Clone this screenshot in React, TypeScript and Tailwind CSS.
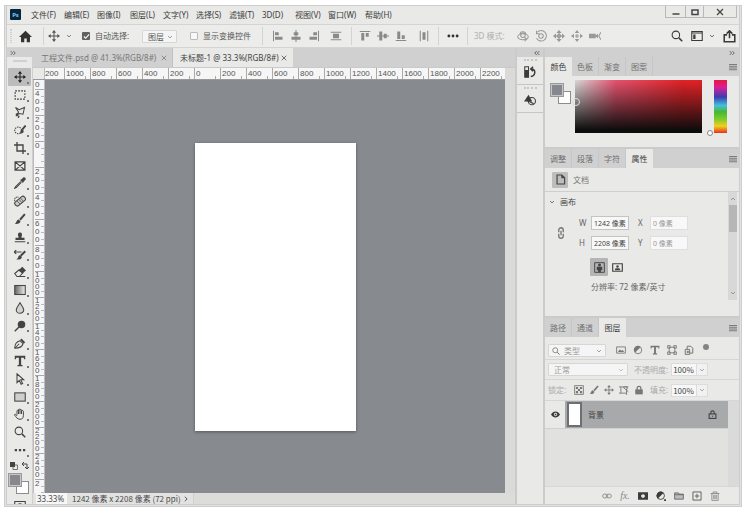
import type { ReactNode } from "react";

type IconProps = { children: ReactNode; className?: string };

function Icon({ children, className = "size-3" }: IconProps) {
  return (
    <svg viewBox="0 0 16 16" fill="none" stroke="currentColor" strokeWidth="1.4" className={`block shrink-0 ${className}`} aria-hidden="true">
      {children}
    </svg>
  );
}

const solid = { fill: "currentColor", stroke: "none" };

const moveShape = (
  <>
    <path d="M8 2v12M2 8h12" />
    <path {...solid} d="M8 0l2.800 3.600H5.200zM8 16l2.800-3.600H5.200zM0 8l3.600-2.800v5.600zM16 8l-3.600-2.800v5.600z" />
  </>
);
const chevronDown = <path d="M3 5.500l5 5 5-5" strokeWidth="2" />;
const lockShape = (
  <>
    <rect x="2" y="7" width="12" height="8" strokeWidth="2" />
    <path d="M5 7V4.500a3 3 0 0 1 6 0V7M8 10v2" strokeWidth="2" />
  </>
);
const magnifier = (
  <>
    <circle cx="6.500" cy="6.500" r="5" />
    <path d="M10.500 10.500L15 15" strokeWidth="2" />
  </>
);
const brushShape = (
  <>
    <path d="M14.500 1.500L8 9" strokeWidth="2.600" />
    <path {...solid} d="M6 8.500l2.600 2.300c0 3-3 4-7.600 3.700C3.500 13.500 3 9 6 8.500z" />
  </>
);

const menus = ["文件(F)", "编辑(E)", "图像(I)", "图层(L)", "文字(Y)", "选择(S)", "滤镜(T)", "3D(D)", "视图(V)", "窗口(W)", "帮助(H)"];

function MenuBar() {
  return (
    <header className="flex h-[18px] shrink-0 items-start">
      <div className="ml-[3px] mt-[3px] flex h-[11px] w-[11px] items-center justify-center rounded-[1px] bg-[#06243a] text-[6px] font-bold leading-none text-[#7cc4ee]">Ps</div>
      <nav className="ml-[6px] flex h-[18px] items-center text-[#3c3c3c]">
        {menus.map((m) => (
          <button key={m} type="button" className="w-[33px] whitespace-nowrap px-1 text-left leading-[18px] last:ml-1">
            {m}
          </button>
        ))}
      </nav>
      <div className="ml-auto mr-[2px] flex h-3 border-x border-b border-[#b9b9b9] text-[#444]">
        <button type="button" aria-label="最小化" className="flex w-5 items-center justify-center border-r border-[#b9b9b9]">
          <Icon className="size-2"><path d="M1 12h14" strokeWidth="3" /></Icon>
        </button>
        <button type="button" aria-label="最大化" className="flex w-[18px] items-center justify-center border-r border-[#b9b9b9]">
          <Icon className="size-2"><path d="M2 4h12v9H2z" strokeWidth="3" /></Icon>
        </button>
        <button type="button" aria-label="关闭" className="flex w-8 items-center justify-center">
          <Icon className="size-2"><path d="M2 2l12 12M14 2L2 14" strokeWidth="2.500" /></Icon>
        </button>
      </div>
    </header>
  );
}

const alignA = [
  { n: "左对齐", i: <><path d="M2 1v14" /><path {...solid} d="M4 3h5v4H4zM4 9h10v4H4z" /></> },
  { n: "水平居中", i: <><path d="M8 0v16" /><path {...solid} d="M5 3h6v4H5zM2 9h12v4H2z" /></> },
  { n: "右对齐", i: <><path d="M14 1v14" /><path {...solid} d="M7 3h5v4H7zM2 9h10v4H2z" /></> },
];
const alignB = [
  { n: "顶对齐", i: <><path d="M1 2h14" /><path {...solid} d="M3 4h4v10H3zM9 4h4v5H9z" /></> },
  { n: "垂直居中", i: <><path d="M0 8h16" /><path {...solid} d="M3 2h4v12H3zM9 5h4v6H9z" /></> },
  { n: "底对齐", i: <><path d="M1 14h14" /><path {...solid} d="M3 2h4v10H3zM9 7h4v5H9z" /></> },
];
const modes3d = [
  { n: "旋转", i: <><ellipse cx="8" cy="9" rx="7" ry="4" /><path d="M4 6c0-5 7-5 8 0M10 15l3-3-3-2" /><circle cx="8" cy="7" r="3" /></> },
  { n: "滚动", i: <><path d="M3 3a7 7 0 1 1-1 8M2 1v4h4" /><circle cx="8" cy="8" r="3" /></> },
  { n: "平移", i: <><path d="M8 2v12M2 8h12M5 8l3-3 3 3-3 3z" /><path {...solid} d="M8 0l3.500 4h-7zM8 16l3.500-4h-7zM0 8l4-3.500v7zM16 8l-4-3.500v7z" /></> },
  { n: "滑动", i: <><path {...solid} d="M8 0l3 4H5zM8 16l3-4H5zM0 8l4-3v6zM16 8l-4-3v6z" /><circle cx="8" cy="8" r="1.500" /></> },
  { n: "相机", i: <><path {...solid} d="M0 5h9v6H0zM8 8l4-3v6z" /><path d="M16 3l-3 5 3 5" /></> },
];

function Separator() {
  return <span className="h-[18px] w-px shrink-0 bg-[#d3d3d3]" />;
}

function ToolButton({ name, children }: { name: string; children: ReactNode }) {
  return (
    <button type="button" aria-label={name} className="flex w-[18px] shrink-0 items-center justify-center">
      <Icon className="size-3">{children}</Icon>
    </button>
  );
}

function Dropdown({ label, value, className, pad = "pl-[5px]", chevron = "text-[#777]" }: { label: string; value: string; className: string; pad?: string; chevron?: string }) {
  return (
    <span className={`relative h-[13px] shrink-0 rounded-[1px] border border-[#d6d6d6] bg-[#f5f5f5] ${className}`}>
      <select aria-label={label} className={`block h-full w-full appearance-none bg-transparent leading-[11px] outline-none ${pad}`}>
        <option>{value}</option>
      </select>
      <span className={`pointer-events-none absolute right-[3px] top-[3px] ${chevron}`}>
        <Icon className="size-[6px]">{chevronDown}</Icon>
      </span>
    </span>
  );
}

function OptionsBar() {
  return (
    <div className="flex h-6 shrink-0 items-center overflow-hidden border-y border-[#d4d4d4] bg-[#ececeb] text-[#555]">
      <span className="ml-[3px] h-[14px] w-[2px] shrink-0 border-x border-dotted border-[#cfcfcf]" />
      <button type="button" aria-label="主页" className="ml-[7px] mr-[11px] text-[#333]">
        <Icon className="size-[13px]"><path {...solid} d="M8 1l8 7.500h-2.500V15h-4v-4.500h-3V15h-4V8.500H0z" /></Icon>
      </button>
      <Separator />
      <button type="button" aria-label="移动工具" className="ml-1 flex items-center gap-[6px]">
        <Icon className="size-3">{moveShape}</Icon>
        <Icon className="size-[6px]">{chevronDown}</Icon>
      </button>
      <label className="ml-[10px] flex w-[60px] shrink-0 items-center gap-[5px] whitespace-nowrap">
        <input type="checkbox" defaultChecked className="peer sr-only" />
        <span className="flex size-2 items-center justify-center rounded-[1px] bg-[#626262] text-white">
          <Icon className="size-[7px]"><path d="M2 8l4 4 8-9" strokeWidth="2.500" /></Icon>
        </span>
        自动选择:
      </label>
      <Dropdown label="自动选择" value="图层" className="w-[35px]" />
      <label className="ml-[13px] flex w-[72px] shrink-0 items-center gap-[5px] whitespace-nowrap">
        <input type="checkbox" className="size-2 appearance-none rounded-[1px] border border-[#bbb] bg-[#f8f8f8]" />
        显示变换控件
      </label>
      <Separator />
      <div className="flex pl-[6px] text-[#8a8a8a]">
        {alignA.map((a) => <ToolButton key={a.n} name={a.n}>{a.i}</ToolButton>)}
        <span className="w-1" />
        <ToolButton name="水平分布"><path d="M1 3h14M1 13h14" /><path {...solid} d="M4 5h8v6H4z" /></ToolButton>
      </div>
      <span className="w-[6px]" />
      <Separator />
      <div className="flex pl-1 text-[#8a8a8a]">
        {alignB.map((a) => <ToolButton key={a.n} name={a.n}>{a.i}</ToolButton>)}
        <span className="w-[5px]" />
        <ToolButton name="垂直分布"><path d="M3 1v14M13 1v14" /><path {...solid} d="M6 3h4v10H6z" /></ToolButton>
      </div>
      <span className="w-[5px]" />
      <Separator />
      <div className="flex px-[5px] text-[#333]">
        <ToolButton name="更多"><g {...solid}><circle cx="2.500" cy="8" r="1.900" /><circle cx="8" cy="8" r="1.900" /><circle cx="13.500" cy="8" r="1.900" /></g></ToolButton>
      </div>
      <Separator />
      <span className="w-[46px] shrink-0 whitespace-nowrap pl-[6px] text-[#b0b0b0]">3D 模式:</span>
      <div className="flex text-[#999]">
        {modes3d.map((a) => <ToolButton key={a.n} name={a.n}>{a.i}</ToolButton>)}
      </div>
      <div className="ml-auto mr-[3px] flex items-center text-[#3a3a3a]">
        <ToolButton name="搜索">{magnifier}</ToolButton>
        <button type="button" aria-label="工作区" className="flex items-center gap-[6px] pl-[5px] pr-2">
          <Icon className="size-3"><path d="M1 2h14v12H1zM1 4h14" /><path {...solid} d="M3 6h3v6H3z" /></Icon>
          <Icon className="size-[6px]">{chevronDown}</Icon>
        </button>
        <button type="button" aria-label="共享">
          <Icon className="size-[13px]"><path d="M5 6H1.500v8.500h13V6H11M8 10V2M4.500 4.500L8 1l3.500 3.500" strokeWidth="1.900" /></Icon>
        </button>
      </div>
    </div>
  );
}

const tools: { n: string; i: ReactNode; flat?: boolean }[] = [
  { n: "移动", i: moveShape },
  { n: "选框", i: <path d="M1.500 2.500h13v11h-13z" strokeDasharray="2.500 1.500" /> },
  { n: "套索", i: <path d="M2 2l5 3 7-3-2 9-5-1-3 2 2-4zM5 10c-3 0-3 3 0 3s1 3 0 3" /> },
  { n: "快速选择", i: <><circle cx="5.500" cy="8.500" r="4.500" strokeDasharray="2 1.200" /><path d="M15.500 2L11 7.500" strokeWidth="2.600" /><path {...solid} d="M10 6.500l3 2.500c0 3-2 4-5.500 4 2-2 .500-5 2.500-6.500z" /></> },
  { n: "裁剪", i: <path d="M4 0v12h12M0 4h12v12" strokeWidth="1.800" /> },
  { n: "图框", i: <path d="M1.500 2.500h13v11h-13zM1.500 2.500l13 11M14.500 2.500l-13 11" strokeWidth="1.700" />, flat: true },
  { n: "吸管", i: <><path d="M9 6L2 13l-1 2 2-1 7-7" /><path {...solid} d="M8 4l2-1 2-2c2-2 5 1 3 3l-2 2-1 2z" /></> },
  { n: "修复画笔", i: <><rect x="0" y="5" width="16" height="6.500" rx="2.500" transform="rotate(-40 8 8)" fill="#c9c9c9" /><path d="M6 5.500l5 5M4 8l4 4M8.500 4l4 4.500" strokeWidth="1" /><path d="M1 8c-1-4 2-6 5-5" strokeDasharray="1.500 1" /></> },
  { n: "画笔", i: brushShape },
  { n: "图章", i: <path {...solid} d="M6 7.500C2.500 0 13.500 0 10 7.500V9h4v3H2V9h4zM1 13.500h14V15H1z" /> },
  { n: "历史画笔", i: <><path d="M15 3l-6 6" strokeWidth="2.600" /><path {...solid} d="M8 8l2.500 2.500C10 14 7 14 3 14c3-1 2-5 5-6z" /><path d="M0 4h10M3 1.500L0 4l3 2.500" /></> },
  { n: "橡皮擦", i: <><path d="M1 10l6-5 5 4-5 5H4z" /><path {...solid} d="M6 6l5-5 5 5-5 4z" /><path d="M6 14h9" /></> },
  { n: "渐变", i: <rect x="1" y="2" width="14" height="12" fill="url(#toolGradient)" /> },
  { n: "模糊", i: <path d="M8 1C6 5 3 7.500 3 10.500a5 4.500 0 0 0 10 0C13 7.500 10 5 8 1z" fill="#d2d2d2" /> },
  { n: "减淡", i: <><circle {...solid} cx="10" cy="6" r="5" /><path d="M7 9l-6 6" strokeWidth="2" /></> },
  { n: "钢笔", i: <><path d="M1 15c0-6 3-9 7-10l4 4c-1 4-4 6-11 6zM1 15l6-6" /><path d="M9 3l5 5" strokeWidth="2.600" /></> },
  { n: "文字", i: <path {...solid} d="M1 1h14v4.500h-1.500L13 3.500H9.500v9.500l2 .500V15h-7v-1.500l2-.500V3.500H3l-.500 2H1z" /> },
  { n: "路径选择", i: <path d="M4 1v12l3-3 2.500 5 2-1L9 9h4z" /> },
  { n: "矩形", i: <rect x="1" y="2.500" width="14" height="11" fill="#cfcfcf" /> },
  { n: "抓手", i: <path d="M4 9V4c0-1.500 2-1.500 2 0V2.500c0-1.500 2-1.500 2 0v.500c0-1.500 2-1.500 2 0v1.500c0-1.500 2.500-1.500 2.500 0V10c0 4-2 5-4.500 5C4 15 3 12 .800 9.500c-.500-1.500 1.200-2 3.200 1M6 4v4M8 3v5M10 4v4" strokeWidth="1.300" /> },
  { n: "缩放", i: magnifier, flat: true },
  { n: "编辑工具栏", i: <path {...solid} d="M1 6.500h3v3H1zM6.500 6.500h3v3h-3zM12 6.500h3v3h-3z" /> },
];

function Swatches({ className = "" }: { className?: string }) {
  return (
    <div className={`relative h-[21px] w-[21px] shrink-0 ${className}`}>
      <button type="button" aria-label="背景色" className="absolute bottom-0 right-0 size-[13px] border border-[#8d8d8d] bg-white" />
      <button type="button" aria-label="前景色" className="absolute left-0 top-0 size-[14px] border border-[#999] bg-[#85898e] outline-1 -outline-offset-2 outline-[#c6c6c6]" />
    </div>
  );
}

function Toolbar() {
  return (
    <aside className="flex w-[26px] shrink-0 flex-col overflow-hidden border-r border-[#cfcfcf] bg-[#e9e9e8] text-[#444]">
      <svg className="absolute size-0" aria-hidden="true">
        <defs><linearGradient id="toolGradient"><stop stopColor="#666" /><stop offset="1" stopColor="#eee" /></linearGradient></defs>
      </svg>
      <button type="button" aria-label="展开面板" className="flex h-[9px] shrink-0 items-center bg-[#d0d0d0] pl-[3px]">
        <Icon className="size-[6px]"><path d="M2 3l5 5-5 5M9 3l5 5-5 5" strokeWidth="2" /></Icon>
      </button>
      <div className="mx-auto mt-[3px] h-[2px] w-[14px] shrink-0 bg-[#d0d0d0]" />
      <div className="mt-[6px] flex h-[391px] shrink-0 flex-col">
        {tools.map((t, k) => (
          <button
            key={t.n}
            type="button"
            aria-label={t.n}
            className={`relative mx-px flex flex-1 items-center justify-center ${k === 0 ? "rounded-[1px] bg-[#bcbcbc] text-[#222]" : ""}`}
          >
            <Icon className="size-3">{t.i}</Icon>
            {!t.flat && <span className="absolute bottom-[2px] right-[2px] h-[2px] w-[2px] bg-[#777]" />}
          </button>
        ))}
      </div>
      <div className="flex h-[14px] shrink-0 items-center justify-between px-[3px]">
        <Icon className="size-2"><path d="M6 6h9v9H6z" /><path {...solid} d="M0 0h10v10H0z" /></Icon>
        <Icon className="size-2"><path d="M3 4h9v9M6 0L2 4l4 4M8 10l4 4 4-4" strokeWidth="2" /></Icon>
      </div>
      <Swatches className="ml-px" />
      <button type="button" aria-label="快速蒙版" className="mx-auto mt-[6px]">
        <Icon className="size-3"><path d="M1 2h14v12H1z" /><circle cx="8" cy="8" r="3" /></Icon>
      </button>
    </aside>
  );
}

const horizontalMarks = [1000, 800, 600, 400, 200, 0, 200, 400, 600, 800, 1000, 1200, 1400, 1600, 1800, 2000, 2200];
const verticalMarks = ["400", "200", "0", "200", "400", "600", "800", "1000", "1200", "1400", "1600", "1800", "2000", "2200", "2400", "2"];

function DocumentTab({ title, active = false }: { title: string; active?: boolean }) {
  return (
    <div className={`flex items-center justify-between whitespace-nowrap ${active ? "w-[120px] bg-[#e9e9e8] pl-[7px] pr-[6px] text-[#444]" : "w-[140px] border-r border-[#c2c2c2] pl-2 pr-[5px] text-[#777]"}`}>
      <button type="button">{title}</button>
      <button type="button" aria-label="关闭文档" className="shrink-0">
        <Icon className="size-[6px]"><path d="M2 2l12 12M14 2L2 14" strokeWidth="2" /></Icon>
      </button>
    </div>
  );
}

function DocumentArea() {
  return (
    <main className="flex min-w-0 flex-1 flex-col bg-[#dadad9]">
      <div className="flex h-5 shrink-0 border-b border-[#c9c9c9] bg-[#d0d0d0]">
        <DocumentTab title="工程文件.psd @ 41.3%(RGB/8#)" />
        <DocumentTab title="未标题-1 @ 33.3%(RGB/8#)" active />
      </div>
      <div className="mr-[10px] flex h-3 shrink-0 overflow-hidden border-b border-[#999] bg-[#f6f6f6] font-['Liberation_Sans',sans-serif] leading-[11px] text-[#555]">
        <span className="w-3 shrink-0 border-r border-[#bbb] bg-[#e9e9e8]" />
        <span className="flex w-[19px] shrink-0">200</span>
        {horizontalMarks.map((m, k) => (
          <span key={k} className="flex w-[26px] shrink-0 justify-between border-l border-[#aaa] pl-px">
            {m}
            <i className="mr-1 h-[3px] w-px self-end bg-[#aaa]" />
          </span>
        ))}
      </div>
      <div className="flex min-h-0 flex-1">
        <div className="w-3 shrink-0 overflow-hidden border-x border-[#bbb] bg-[#f6f6f6] pl-px font-['Liberation_Sans',sans-serif] text-[#555]">
          <div className="h-[9px] leading-[9px]">0</div>
          {verticalMarks.map((m, k) => (
            <div key={k} className="flex h-[26px] justify-between border-t border-[#aaa]">
              <span className={`w-[5px] break-all ${m.length > 3 ? "leading-[6px]" : "leading-[8px]"}`}>{m}</span>
              <span className="flex w-[3px] flex-col justify-evenly">
                <i className="h-px bg-[#bbb]" />
                <i className="h-px bg-[#bbb]" />
                <i className="h-px bg-[#bbb]" />
              </span>
            </div>
          ))}
        </div>
        <div className="flex flex-1 items-center justify-center bg-[#878b90]">
          <div className="h-[288px] w-[161px] bg-white shadow-[0_1px_3px_#55585c]" />
        </div>
        <div className="w-[10px] shrink-0" />
      </div>
      <footer className="flex h-[11px] shrink-0 items-center bg-[#e2e2e1] text-[#4a4a4a]">
        <input aria-label="缩放比例" defaultValue="33.33%" className="ml-[3px] h-[11px] w-[31px] bg-[#f7f7f7] pl-px outline-none" />
        <span className="w-[112px] whitespace-nowrap pl-[5px] font-['Noto_Sans_CJK_SC',sans-serif] leading-[11px]">1242 像素 x 2208 像素 (72 ppi)</span>
        <button type="button" aria-label="状态信息" className="ml-1">
          <Icon className="size-[6px]"><path d="M5 2l6 6-6 6" strokeWidth="2.400" /></Icon>
        </button>
        <span className="ml-1 h-full flex-1 border-l border-[#d0d0d0] bg-[#dcdcdb]" />
      </footer>
    </main>
  );
}

function PanelTabs({ items, active }: { items: string[]; active: number }) {
  return (
    <div className="flex h-[19px] shrink-0 items-stretch bg-[#d0d0d0] text-[#707070]">
      {items.map((t, k) => (
        <button key={t} type="button" className={`w-[27px] ${k === active ? "bg-[#e9e9e8] text-[#3c3c3c]" : "border-r border-[#c6c6c6]"}`}>
          {t}
        </button>
      ))}
      <button type="button" aria-label="面板菜单" className="ml-auto mr-[2px] text-[#666]">
        <Icon className="size-2"><path d="M0 3h16M0 6.500h16M0 10h16M0 13.500h16" strokeWidth="1.600" /></Icon>
      </button>
    </div>
  );
}

function IconStrip() {
  return (
    <aside className="flex w-[30px] shrink-0 flex-col border-x-2 border-[#cbcbcb] bg-[#e9e9e8] text-[#3c3c3c]">
      <div className="flex h-[9px] items-center justify-end bg-[#d0d0d0] pr-[3px]">
        <Icon className="size-[6px]"><path d="M7 3L2 8l5 5M14 3L9 8l5 5" strokeWidth="2" /></Icon>
      </div>
      <button type="button" aria-label="历史记录" className="flex h-7 flex-col items-center gap-[5px] border-b border-[#c6c6c6] pt-[2px]">
        <span className="w-[13px] border-t-2 border-dotted border-[#c6c6c6]" />
        <Icon className="size-3"><path d="M1 1h5v14H1zM1 6h5M1 10h5" /><path {...solid} d="M1 6h5v9H1z" /><path d="M9 14c7-1 7-10 1-10M12 1L9 4l3 3" strokeWidth="2" /></Icon>
      </button>
      <button type="button" aria-label="库" className="flex h-7 flex-col items-center gap-[5px] border-b border-[#c6c6c6] pt-[2px]">
        <span className="w-[13px] border-t-2 border-dotted border-[#c6c6c6]" />
        <Icon className="size-3"><path {...solid} d="M6 1l5 9H0z" /><circle cx="10.500" cy="9.500" r="4.800" /><path d="M5 9l8 4" /></Icon>
      </button>
    </aside>
  );
}

function ColorPanel() {
  return (
    <section className="shrink-0 border-b-2 border-[#cbcbcb]">
      <PanelTabs items={["颜色", "色板", "渐变", "图案"]} active={0} />
      <div className="flex h-[71px] items-start pl-[5px] pt-1">
        <Swatches className="mt-[3px]" />
        <div className="relative ml-1 h-[53px] flex-1 bg-[linear-gradient(to_bottom,transparent,#0c0c0c_95%),linear-gradient(to_right,#d8d8d8,#e5536f_32%,#e32226_85%)]">
          <span className="absolute -left-[3px] top-[18px] size-2 rounded-full border border-[#ddd]" />
        </div>
        <div className="relative ml-3 mr-3 h-[53px] w-[13px] bg-[linear-gradient(to_bottom,#e8183f,#d91f9a_14%,#3b3db0_32%,#45bfe0_48%,#45b832_60%,#7ecb2a_74%,#f0d020_87%,#e8301c)]">
          <span className="absolute -bottom-[3px] -left-[7px] size-[6px] rounded-full border border-[#888] bg-white" />
        </div>
      </div>
    </section>
  );
}

function SizeField({ label, value, muted = false }: { label: string; value: string; muted?: boolean }) {
  return (
    <label className="flex items-center text-[#666]">
      <span className="w-3">{label}</span>
      <input defaultValue={value} className={`h-[14px] w-[38px] border bg-[#f8f8f8] pl-[2px] text-[7px] outline-none ${muted ? "border-[#dfdfdf] text-[#999]" : "border-[#c4c4c4] text-[#444]"}`} />
    </label>
  );
}

function PropertiesPanel() {
  return (
    <section className="shrink-0 border-b-2 border-[#cbcbcb]">
      <PanelTabs items={["调整", "段落", "字符", "属性"]} active={3} />
      <div className="flex h-6 items-center gap-[5px] border-b border-[#cfcfcf] pl-[7px] text-[#777]">
        <span className="flex size-4 items-center justify-center rounded-[1px] bg-[#bdbdbd] text-[#444]">
          <Icon className="size-[11px]"><path d="M3 1.500h7l4 4v9H3zM10 1.500v4h4" strokeWidth="1.700" /></Icon>
        </span>
        文档
      </div>
      <div className="flex h-[108px]">
        <div className="flex-1">
          <button type="button" className="flex h-5 items-center gap-[5px] pl-1 text-[#444]">
            <Icon className="size-[6px]">{chevronDown}</Icon>
            画布
          </button>
          <div className="flex items-center pl-[10px] pt-1">
            <Icon className="size-3 text-[#777]"><path d="M5 7V4a3 3 0 0 1 6 0v3M5 9v3a3 3 0 0 0 6 0V9M8 5v6" strokeWidth="1.800" /></Icon>
            <div className="ml-3 grid grid-cols-2 gap-x-[9px] gap-y-[6px]">
              <SizeField label="W" value="1242 像素" />
              <SizeField label="X" value="0 像素" muted />
              <SizeField label="H" value="2208 像素" />
              <SizeField label="Y" value="0 像素" muted />
            </div>
          </div>
          <div className="flex items-center gap-1 pl-[45px] pt-2 text-[#444]">
            <button type="button" aria-label="纵向" className="flex size-[18px] items-center justify-center rounded-[1px] bg-[#b5b5b5]">
              <Icon className="size-[11px]"><path d="M1 1h14v14H1z" /><circle {...solid} cx="8" cy="4.500" r="2.200" /><path {...solid} d="M4 7h8v5h-2v3H6v-3H4z" /></Icon>
            </button>
            <button type="button" aria-label="横向">
              <Icon className="size-[11px]"><path d="M1 2.500h14v11H1z" strokeWidth="1.700" /><circle {...solid} cx="8" cy="6.500" r="1.800" /><path {...solid} d="M4 12l1-3h6l1 3z" /></Icon>
            </button>
          </div>
          <p className="whitespace-nowrap pl-[46px] pt-[5px] leading-3 text-[#666]">分辨率: 72 像素/英寸</p>
        </div>
        <div className="mr-[2px] flex w-[9px] flex-col items-center bg-[#d8d8d8] text-[#777]">
          <Icon className="mt-1 size-[6px]"><path d="M3 10.500l5-5 5 5" strokeWidth="2" /></Icon>
          <span className="mt-[3px] h-[27px] w-2 bg-[#b6b6b6]" />
          <Icon className="mb-1 mt-auto size-[6px]">{chevronDown}</Icon>
        </div>
      </div>
      <div className="h-4" />
    </section>
  );
}

const filters = [
  { n: "像素图层", i: <><path d="M1 3h14v10H1z" /><path {...solid} d="M3 11l3-4 3 2 2-1 2 3z" /></> },
  { n: "调整图层", i: <><circle cx="8" cy="8" r="6" /><path {...solid} d="M12 3.500A6 6 0 1 0 3.500 12z" /></> },
  { n: "文字图层", i: <path {...solid} d="M1 1h14v4.500h-1.500L13 3.500H9.500v9.500l2 .500V15h-7v-1.500l2-.500V3.500H3l-.500 2H1z" /> },
  { n: "形状图层", i: <path d="M3.500 3.500h9v9h-9zM1 1h4v4H1zM11 1h4v4h-4zM1 11h4v4H1zM11 11h4v4h-4z" /> },
  { n: "智能对象", i: <path d="M2 7h7v8H2zM5 7V2h6l3 3v8H9M5 10h2v2H5z" strokeWidth="1.600" /> },
];
const locks = [
  { n: "锁定透明像素", i: <><path d="M1 1h14v14H1z" /><path {...solid} d="M3 3h3.500v3.500H3zM9.500 3H13v3.500H9.500zM6.300 6.300h3.400v3.400H6.300zM3 9.500h3.500V13H3zM9.500 9.500H13V13H9.500z" /></> },
  { n: "锁定图像像素", i: brushShape },
  { n: "锁定位置", i: moveShape },
  { n: "防止嵌套", i: <path d="M0 3h15M3 3v10M0 13h12M12 6v10M6 3l9 8M8 3h5v4" /> },
  { n: "锁定全部", i: <><path d="M5 8V5a3 3 0 0 1 6 0v3" strokeWidth="2" /><path {...solid} d="M2 7h12v8H2z" /></> },
];
const layerActions = [
  { n: "链接", i: <path d="M7 5H4a3 3 0 0 0 0 6h3M9 5h3a3 3 0 0 1 0 6H9M7 5v6M9 5v6" />, c: "text-[#888]" },
  { n: "样式", i: null, c: "text-[#888]" },
  { n: "蒙版", i: <path {...solid} fillRule="evenodd" d="M0 2h16v12H0zM8 5a3 3 0 1 0 .1 0z" />, c: "text-[#3c3c3c]" },
  { n: "调整", i: <><circle cx="7.500" cy="7.500" r="6" /><path {...solid} d="M12 3A6 6 0 1 0 3 12zM13 13h3v3h-3z" /></>, c: "text-[#3c3c3c]" },
  { n: "组", i: <path d="M1 3h6l1 2h7v8H1zM1 6h14" fill="#bdbdbd" />, c: "text-[#666]" },
  { n: "新建", i: <path d="M1.500 1.500h13v13h-13zM8 4.500v7M4.500 8h7" />, c: "text-[#555]" },
  { n: "删除", i: <path d="M1 4h14M5 4V1.500h6V4M3 4v11h10V4M6 6v7M8 6v7M10 6v7" />, c: "text-[#888]" },
];

function Percent({ label }: { label: string }) {
  return (
    <label className="flex shrink-0 items-center whitespace-nowrap text-[#a8a8a8]">
      {label}
      <input defaultValue="100%" className="ml-[3px] h-[13px] w-[26px] border border-[#dcdcdc] bg-[#f7f7f7] pl-px font-['Noto_Sans_CJK_SC',sans-serif] text-[#444] outline-none" />
      <span className="flex h-[13px] w-[11px] items-center justify-center border-y border-r border-[#dcdcdc] bg-[#f1f1f1] text-[#888]">
        <Icon className="size-[6px]">{chevronDown}</Icon>
      </span>
    </label>
  );
}

function LayersPanel() {
  return (
    <section className="flex min-h-0 flex-1 flex-col">
      <PanelTabs items={["路径", "通道", "图层"]} active={2} />
      <div className="flex h-[23px] shrink-0 items-center border-b border-[#d6d6d6] pl-[3px] pt-1 text-[#999]">
        <span className="relative flex">
          <Dropdown label="图层类型" value="类型" className="w-[58px]" pad="pl-[15px]" />
          <span className="pointer-events-none absolute left-1 top-[3px] text-[#666]">
            <Icon className="size-2">{magnifier}</Icon>
          </span>
        </span>
        <div className="ml-[9px] flex gap-[5px] text-[#777]">
          {filters.map((f) => (
            <button key={f.n} type="button" aria-label={f.n} className="flex w-3 justify-center"><Icon className="size-[10px]">{f.i}</Icon></button>
          ))}
        </div>
        <span className="mb-[6px] ml-2 size-[6px] rounded-full bg-[#848484]" />
      </div>
      <div className="flex h-5 shrink-0 items-center border-b border-[#d6d6d6] pl-[3px] text-[#999]">
        <Dropdown label="混合模式" value="正常" className="mr-[6px] w-[80px]" chevron="text-[#aaa]" />
        <Percent label="不透明度:" />
      </div>
      <div className="flex h-[21px] shrink-0 items-center border-b border-[#d6d6d6] pl-[3px] text-[#aaa]">
        <span className="w-[25px] shrink-0">锁定:</span>
        <div className="flex gap-1 text-[#777]">
          {locks.map((f) => (
            <button key={f.n} type="button" aria-label={f.n} className="flex w-[11px] justify-center"><Icon className="size-[10px]">{f.i}</Icon></button>
          ))}
        </div>
        <span className="w-[6px]" />
        <Percent label="填充:" />
      </div>
      <div className="flex min-h-0 flex-1 bg-[#e1e1e0]">
        <div className="flex-1">
          <div className="flex h-7 border-b border-[#d0d0d0]">
            <button type="button" aria-label="切换可见性" className="flex w-5 items-center justify-center bg-[#e9e9e8] text-[#3c3c3c]">
              <Icon className="size-[9px]"><path {...solid} fillRule="evenodd" d="M0 8c4-7 12-7 16 0-4 7-12 7-16 0zM8 5a3 3 0 1 0 .1 0z" /><circle {...solid} cx="8" cy="8" r="1.500" /></Icon>
            </button>
            <div className="flex flex-1 items-center bg-[#a8a9ab] pl-[2px] pr-[11px] text-[#444]">
              <span className="h-[25px] w-[15px] border-2 border-[#6d6f72] bg-white" />
              <span className="ml-[6px]">背景</span>
              <Icon className="ml-auto size-[9px]">{lockShape}</Icon>
            </div>
          </div>
        </div>
        <div className="w-[11px] bg-[#dadada]" />
      </div>
      <div className="flex h-[18px] shrink-0 items-center justify-end gap-[6px] border-t border-[#d6d6d6] pr-[18px]">
        {layerActions.map((a) => (
          <button key={a.n} type="button" aria-label={a.n} className={`flex w-3 justify-center ${a.c}`}>
            {a.i ? <Icon className="size-[10px]">{a.i}</Icon> : <i className="font-['Liberation_Serif',serif] text-[10px] leading-none">fx.</i>}
          </button>
        ))}
      </div>
    </section>
  );
}

export default function App() {
  return (
    <div className="h-screen w-full bg-white px-1 pb-[2px] pt-[5px] font-['Noto_Sans','Noto_Sans_CJK_SC',sans-serif] text-[8px] leading-[12px]">
      <div className="h-full border border-[#cdcdcd] bg-[#e2e2e2] px-px pb-px">
        <div className="flex h-full flex-col overflow-hidden border-x border-b border-[#cdcdcd] bg-[#e9e9e8]">
          <MenuBar />
          <OptionsBar />
          <div className="flex min-h-0 flex-1">
            <Toolbar />
            <DocumentArea />
            <IconStrip />
            <div className="flex w-[194px] shrink-0 flex-col bg-[#e9e9e8]">
              <div className="flex h-[9px] shrink-0 items-center justify-end bg-[#d0d0d0] pr-1 text-[#444]">
                <Icon className="size-[6px]"><path d="M2 3l5 5-5 5M9 3l5 5-5 5" strokeWidth="2" /></Icon>
              </div>
              <ColorPanel />
              <PropertiesPanel />
              <LayersPanel />
            </div>
          </div>
        </div>
      </div>
    </div>
  );
}
